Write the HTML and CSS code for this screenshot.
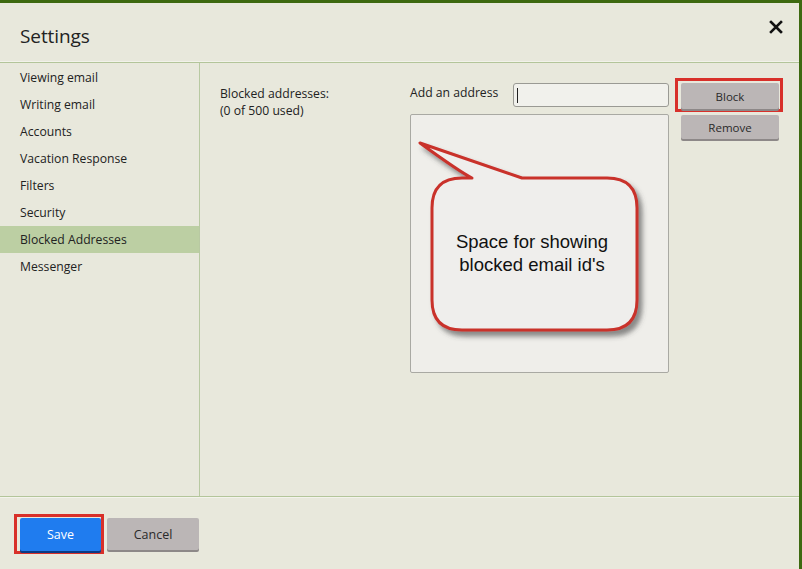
FILE: index.html
```html
<!DOCTYPE html>
<html>
<head>
<meta charset="utf-8">
<link rel="stylesheet" href="styles.css">
</head>
<body>
<div class="dialog">
  <div class="header">
    <h1 class="title">Settings</h1>
    <button class="close" aria-label="Close">
      <svg width="14" height="14" viewBox="0 0 14 14"><path d="M2 2 L12 12 M12 2 L2 12" stroke="#111" stroke-width="2.6" stroke-linecap="square"/></svg>
    </button>
  </div>
  <div class="main">
    <nav class="sidebar">
      <div class="nav-item">Viewing email</div>
      <div class="nav-item">Writing email</div>
      <div class="nav-item">Accounts</div>
      <div class="nav-item">Vacation Response</div>
      <div class="nav-item">Filters</div>
      <div class="nav-item">Security</div>
      <div class="nav-item active">Blocked Addresses</div>
      <div class="nav-item">Messenger</div>
    </nav>
    <section class="content">
      <div class="summary">Blocked addresses:<br>(0 of 500 used)</div>
      <div class="middle">
        <div class="add-row">
          <label class="add-label">Add an address</label>
          <div class="input"><span class="caret"></span></div>
        </div>
        <div class="listbox">
          <svg class="callout" width="259" height="259" viewBox="0 0 259 259">
            <defs>
              <filter id="sh" x="-20%" y="-20%" width="140%" height="140%">
                <feDropShadow dx="4" dy="5" stdDeviation="2.5" flood-color="#444" flood-opacity="0.6"/>
              </filter>
            </defs>
            <path filter="url(#sh)" d="M112 64 L197 64 Q227 64 227 94 L227 186 Q227 216 197 216 L52 216 Q22 216 22 186 L22 94 Q22 64 52 64 L62 64 Q50 58 10 29 Z" fill="#efeeec" stroke="#c9302b" stroke-width="3" stroke-linejoin="round"/>
            <text x="122" y="134" text-anchor="middle" class="callout-text">Space for showing</text>
            <text x="122" y="157" text-anchor="middle" class="callout-text">blocked email id's</text>
          </svg>
        </div>
      </div>
      <div class="actions">
        <div class="highlight">
          <button class="btn gray">Block</button>
        </div>
        <button class="btn gray remove">Remove</button>
      </div>
    </section>
  </div>
  <div class="footer">
    <div class="highlight save-wrap">
      <button class="btn primary">Save</button>
    </div>
    <button class="btn gray cancel">Cancel</button>
  </div>
</div>
</body>
</html>
```

FILE: styles.css
```css
html, body {
  margin: 0;
  padding: 0;
}
body {
  background: #3d6910;
  font-family: "Open Sans", "Noto Sans", sans-serif;
  color: #222;
  width: 802px;
  height: 569px;
  overflow: hidden;
}
.dialog {
  margin-top: 3px;
  width: 799px;
  height: 566px;
  background: #e8e8dc;
  display: flex;
  flex-direction: column;
}
.header {
  height: 58px;
  border-bottom: 1px solid #f2f2ea;
  box-shadow: 0 1px 0 #b3c59a;
  margin-bottom: 1px;
  display: flex;
  align-items: flex-start;
  justify-content: space-between;
  padding: 0 16px 0 20px;
}
.title {
  margin: 20px 0 0 0;
  font-size: 19px;
  font-weight: 400;
  color: #222;
  letter-spacing: -0.1px;
}
.close {
  background: none;
  border: none;
  padding: 0;
  margin-top: 17px;
  width: 14px;
  height: 14px;
  display: flex;
}
.main {
  flex: 0 0 433px;
  display: flex;
  border-bottom: 1px solid #b3c59a;
}
.sidebar {
  width: 199px;
  border-right: 1px solid #b8c9a2;
  padding-top: 1px;
  display: flex;
  flex-direction: column;
}
.nav-item {
  height: 27px;
  line-height: 28px;
  padding-left: 20px;
  font-size: 12.2px;
  color: #222;
}
.nav-item.active {
  background: #bccfa3;
}
.content {
  flex: 1;
  display: flex;
  align-items: flex-start;
  padding: 15px 0 0 20px;
  font-size: 12.2px;
}
.summary {
  width: 190px;
  margin-top: 7px;
  line-height: 17px;
}
.middle {
  width: 259px;
  margin-top: 5px;
  display: flex;
  flex-direction: column;
  gap: 7px;
}
.add-row {
  display: flex;
  align-items: flex-start;
  justify-content: space-between;
  height: 24px;
}
.add-label {
  line-height: 19px;
}
.input {
  width: 151px;
  height: 22px;
  border: 1px solid #9a9a94;
  border-radius: 3px;
  background: #f1f1ec;
  display: flex;
  align-items: center;
  padding-left: 3px;
  box-sizing: content-box;
}
.caret {
  width: 1px;
  height: 15px;
  background: #222;
}
.listbox {
  position: relative;
  width: 257px;
  height: 257px;
  border: 1px solid #a9a9a3;
  border-radius: 2px;
  background: #efeeea;
}
.callout {
  position: absolute;
  left: -1px;
  top: -1px;
}
.callout-text {
  font-family: "Liberation Sans", Arial, sans-serif;
  font-size: 18.5px;
  fill: #111;
}
.actions {
  margin-left: 6px;
  display: flex;
  flex-direction: column;
}
.highlight {
  border: 3px solid #d8302a;
  padding: 2px 1px 0 3px;
  display: flex;
}
.btn {
  font-family: "Open Sans", "Noto Sans", sans-serif;
  font-size: 11.5px;
  border: none;
  border-radius: 2px;
  cursor: pointer;
}
.btn.gray {
  width: 98px;
  height: 26px;
  background: #bbb6b6;
  color: #2a2a2a;
  box-shadow: 0 2px 0 #8d8888;
}
.remove {
  margin: 3px 0 0 6px;
  height: 24px !important;
}
.footer {
  flex: 1;
  border-top: 1px solid #f3f3ec;
  display: flex;
  align-items: flex-start;
  padding: 16px 0 0 14px;
  gap: 3px;
}
.save-wrap {
  padding: 1px 0 0 3px;
}
.btn.primary {
  width: 81px;
  height: 33px;
  background: #1f7cef;
  color: #fff;
  font-size: 12.5px;
  box-shadow: 0 2px 0 #0b3a84;
}
.btn.cancel {
  width: 92px;
  height: 32px;
  margin-top: 4px;
  font-size: 12.5px;
}
```
